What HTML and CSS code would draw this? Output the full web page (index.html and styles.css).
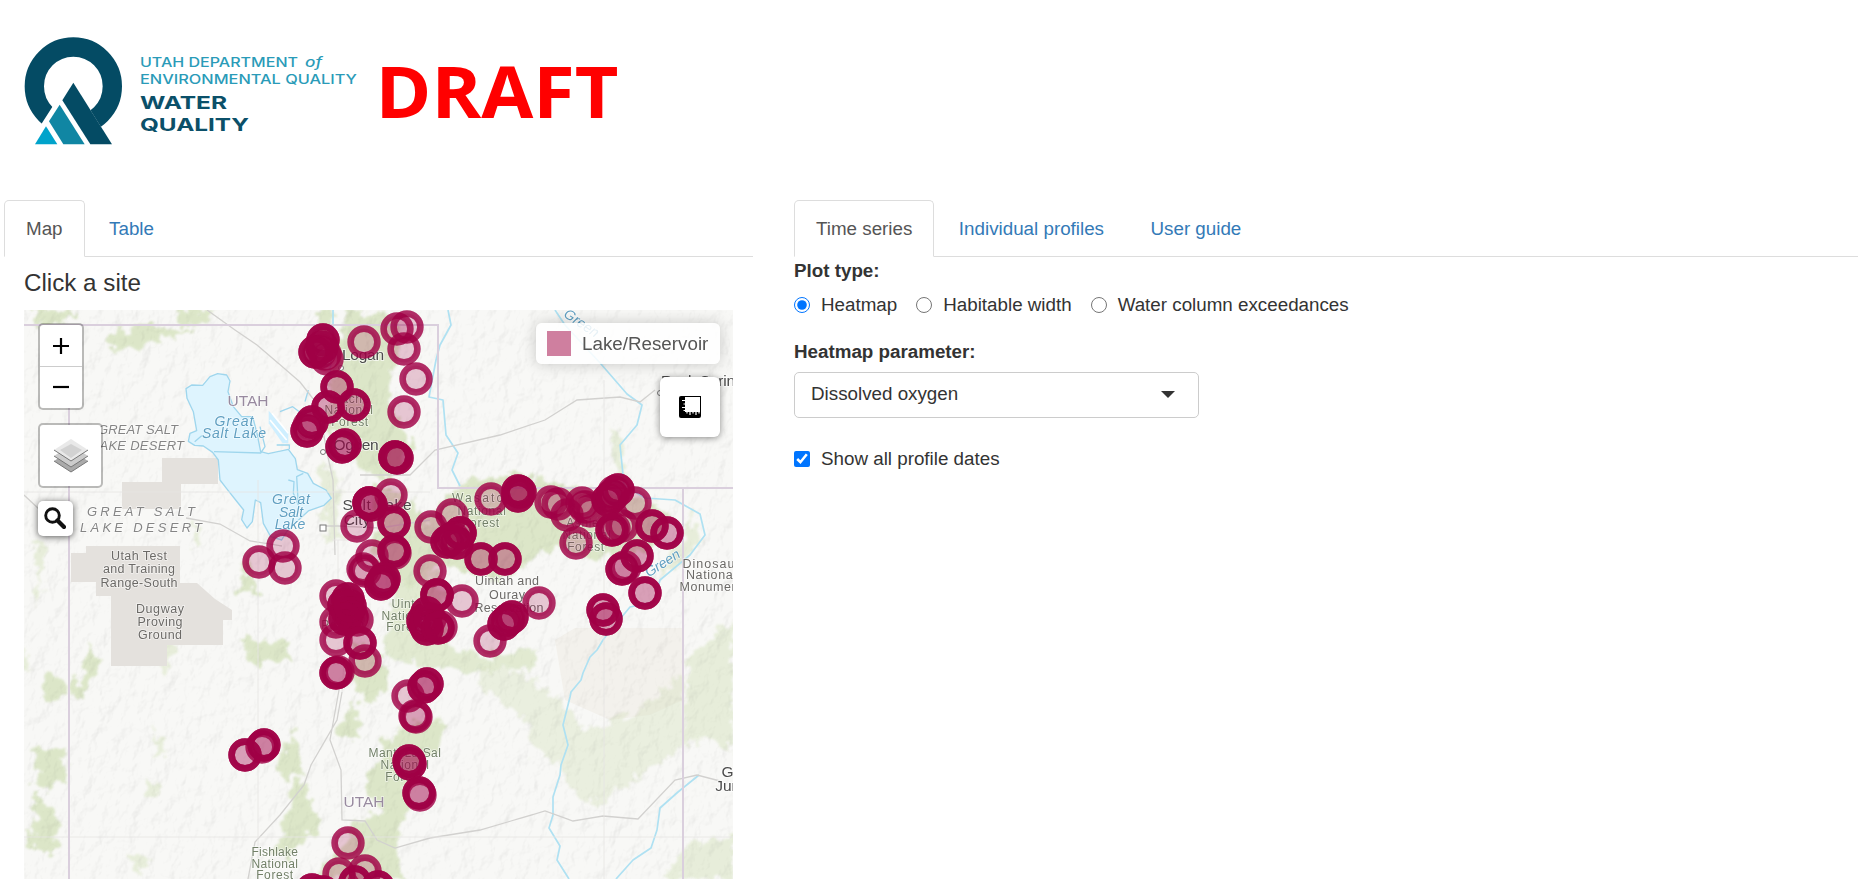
FILE: index.html
```html
<!DOCTYPE html>
<html lang="en">
<head>
<meta charset="utf-8">
<title>Lake profile dashboard</title>
<link rel="stylesheet" href="styles.css">
</head>
<body>
<header class="header">
  <svg class="logo" viewBox="0 0 640 199" role="img" aria-label="Utah Department of Environmental Quality, Water Quality">
    <g transform="translate(0 20) scale(.33333)">
      <ellipse cx="220" cy="199" rx="117" ry="118" fill="none" stroke="#044b64" stroke-width="58"/>
      <path d="M178 228 128 306 80 380H340L220 188 187 240Z" fill="#fff"/>
      <path d="M220 188 187 241 271 373H336Z" fill="#044b64"/>
      <path d="M179 254 147 304 190 373H254Z" fill="#1086a3"/>
      <path d="M138 319 105 373H172Z" fill="#00a3cb"/>
    </g>
    <g class="logo-dept">
      <text x="140" y="67" textLength="158" lengthAdjust="spacingAndGlyphs">UTAH DEPARTMENT</text>
      <text x="305" y="67" textLength="17" lengthAdjust="spacingAndGlyphs" font-style="italic">of</text>
      <text x="140" y="83.500" textLength="217" lengthAdjust="spacingAndGlyphs">ENVIRONMENTAL QUALITY</text>
    </g>
    <g class="logo-division">
      <text x="140" y="109" textLength="87" lengthAdjust="spacingAndGlyphs">WATER</text>
      <text x="140" y="130.500" textLength="109" lengthAdjust="spacingAndGlyphs">QUALITY</text>
    </g>
    <text class="draft" x="375.500" y="117.500" textLength="243" lengthAdjust="spacingAndGlyphs">DRAFT</text>
  </svg>
</header>
<main class="columns">
  <section class="left">
    <nav class="tabs"><a class="tab active">Map</a><a class="tab">Table</a></nav>
    <h4 class="heading">Click a site</h4>
    <div class="map">
      <svg class="map-canvas" id="map" viewBox="24 310 709 569">
        <defs>
          <filter id="rough" x="-5%" y="-5%" width="110%" height="110%">
            <feTurbulence type="fractalNoise" baseFrequency=".09" numOctaves="4" seed="4"/>
            <feDisplacementMap in="SourceGraphic" scale="22" xChannelSelector="R" yChannelSelector="G" result="d"/>
            <feGaussianBlur in="d" stdDeviation="1"/>
          </filter>
          <filter id="relief" x="0" y="0" width="100%" height="100%" color-interpolation-filters="sRGB">
            <feTurbulence type="fractalNoise" baseFrequency=".075 .05" numOctaves="4" seed="12"/>
            <feDiffuseLighting surfaceScale="3" diffuseConstant="1.150" lighting-color="#fff"><feDistantLight azimuth="225" elevation="60"/></feDiffuseLighting>
          </filter>
        </defs>
        <rect x="24" y="310" width="709" height="569" fill="#f8f8f6"/>
        <path d="M555 640 575 628H683V700L650 715 610 720 565 700Z" fill="#f3f1ec"/>
        <g filter="url(#rough)" fill="#d5e2bd" opacity=".8">
          <path d="M33 310H76L60 325 34 321ZM174 310H218L205 326 178 322ZM110 335 140 326 197 328 150 345 110 352Z"/>
          <path d="M317 310H330L326 342 315 350ZM348 310 395 316 399 350 388 400 412 440 394 480 368 475 345 440 325 425 331 380Z"/>
          <path d="M372 485 402 490 424 520 470 480 520 473 580 488 655 500 670 520 650 550 583 559 560 545 500 580 440 563 410 590 378 565Z"/>
          <path d="M395 562 440 578 450 650 490 655 540 650 538 668 470 672 422 668 385 655Z" opacity=".8"/>
          <path d="M480 665 530 676 560 700 584 730 640 712 684 672 684 748 650 765 615 795 590 805 565 778 548 755 535 755 525 725 510 705 485 690Z" opacity=".5"/>
          <path d="M350 640 382 655 388 690 365 704 350 680ZM352 697 362 737H338ZM385 742 410 724 442 720 440 744 405 788 408 806 395 850 404 879H316L323 864 350 842 350 822 385 812 363 787ZM300 775 320 824 285 860 276 850ZM295 730 302 770 285 780 276 765Z"/>
          <path d="M38 750H65V780L45 788 33 772ZM33 795 60 815 56 853 32 850ZM90 640 98 665 82 700 72 697ZM48 670 70 690 58 704 40 695ZM243 553 258 590 240 595ZM243 640H290V663H250Z"/>
          <path d="M690 655 733 620V755L710 740 684 745ZM686 845 733 835V879H665ZM612 425 626 450 622 485 613 460ZM690 510 700 540 680 565 655 580 678 545ZM156 645 175 640 165 675Z" opacity=".6"/>
          <path d="M33 540 48 545 40 582ZM36 580 44 592 35 604ZM20 645 32 658 25 680ZM153 730 168 752 155 760ZM148 780 160 788 150 796ZM125 855 150 860 140 875ZM190 515 204 545 192 550ZM318 460 340 475 342 540 325 540Z" opacity=".6"/>
        </g>
        <rect class="relief" x="24" y="310" width="709" height="569" filter="url(#relief)"/>
        <g fill="#e4e1dd">
          <path d="M162 458H218V484H181V509H122V482H162Z"/>
          <path d="M71 553H86V546H180V583H197L215 599 232 610V620H223V645H167V666H111V596H96V582H71Z"/>
        </g>
        <g transform="translate(20 310) scale(.33333)">
          <g fill="#def4fe" stroke="#9fd6ed" stroke-width="4" stroke-linejoin="round">
            <path d="M498 236 515 225 548 226 570 200 593 191 620 195 630 213 624 245 640 290 665 320 698 320 711 370 722 425 745 431 805 418 826 446 832 479 863 490 880 520 918 540 934 565 912 586 865 603 830 635 800 665 785 690 752 680 730 640 722 578 706 570 697 635 681 654 665 629 671 600 647 570 620 536 600 510 595 450 578 427 550 408 524 406 505 394 510 370 530 362 520 305 501 265Z"/>
            <path d="M524 395 545 377 560 385M582 425 722 429 735 410 720 350M805 510 822 515 820 550 835 585 830 500 850 490M770 405H808V418M780 305 818 290 855 318M855 275 865 240" fill="none"/>
          </g>
          <path d="M746 302 805 365V400H788L746 340Z" fill="#cfefff"/>
          <path d="M756 310 805 370M750 330 800 390" stroke="#fff" stroke-width="5"/>
        </g>
        <g fill="none" stroke="#afe1f2" stroke-width="1.700" stroke-linejoin="round">
          <path d="M333 310V345L329 380M448 310 451 325 440 345 436 360 429 397 443 400 446 435 458 453 452 470 460 486"/>
          <path d="M555 310 565 325 601 364 627 394 642 405 637 425 620 445 624 485 645 498 675 500 700 514 705 535 690 555 660 580 654 602 630 607 606 636 603 640 597 650 590 657 583 673 581 680 571 692 570 697 563 725 568 745 561 765 560 775 553 797 553 815 549 828 560 846 557 860 569 879"/>
          <path d="M699 775 678 792 660 808 657 830 651 848 633 860 616 879"/>
        </g>
        <g fill="none" stroke="#d2d1cf" stroke-width="1.300">
          <path d="M207 310 235 330 257 345 278 363 300 382 318 405 328 457 333 480 335 555M24 495 40 510M186 518 220 524 250 541 282 546M320 526H338L380 528 430 520M360 475 410 475 435 450 500 435 545 420 577 400 620 397 640 402 655 390M342 692 337 720 311 765 304 785 280 815 255 842 248 879M339 690 330 740 341 770 342 820 365 821 377 840 395 848 430 838 480 830 511 821 545 811 573 821 603 816 638 819 675 780 697 775 720 781"/>
          <path d="M338 540V590L348 600 342 692M332 540H355M24 837H733M258 480V879M24 492H430M604 380V879" stroke="#e6e4e3" stroke-width=".8"/>
        </g>
        <g fill="none" stroke="#dacfdd" stroke-width="2">
          <path d="M24 325H438V488H733M69 325V879M683 489V879"/>
        </g>
        <g class="places">
          <text x="363" y="360" class="city" textLength="42">Logan</text><text x="356" y="450" class="city" textLength="45">Ogden</text>
          <text x="377" y="510" class="city" textLength="69">Salt Lake</text><text x="357" y="525" class="city">City</text>
          <text x="706" y="386" class="city" textLength="90">Rock Springs</text>
          <text x="743" y="777" class="city">Grand</text><text x="744" y="791" class="city">Junction</text>
          <g class="forest">
            <text x="351" y="403">Cache</text><text x="349" y="414">National</text><text x="350" y="426">Forest</text>
            <text x="482" y="502" textLength="60">Wasatch</text><text x="482" y="515">National</text><text x="481" y="527">Forest</text>
            <text x="586" y="527">Ashley</text><text x="587" y="539">National</text><text x="586" y="551">Forest</text>
            <text x="407" y="608">Uinta</text><text x="406" y="620">National</text><text x="405" y="631">Forest</text>
            <text x="405" y="757" textLength="73">Manti-La Sal</text><text x="405" y="769">National</text><text x="404" y="781">Forest</text>
            <text x="275" y="856" textLength="47">Fishlake</text><text x="275" y="868" textLength="47">National</text><text x="275" y="879">Forest</text>
            <text x="348" y="605">Provo</text><text x="343" y="629">Payson</text>
          </g>
          <g class="reserve">
            <text x="139" y="560" textLength="56">Utah Test</text><text x="139" y="573" textLength="72">and Training</text><text x="139" y="587" textLength="77">Range-South</text>
            <text x="160" y="613" textLength="48">Dugway</text><text x="160" y="626" textLength="45">Proving</text><text x="160" y="639" textLength="44">Ground</text>
            <text x="507" y="585" textLength="64">Uintah and</text><text x="507" y="599" textLength="36">Ouray</text><text x="509" y="612" textLength="69">Reservation</text>
            <text x="711" y="568" textLength="57">Dinosaur</text><text x="711" y="579" textLength="50">National</text><text x="711" y="591" textLength="63">Monument</text>
          </g>
          <g class="desert"><text x="138" y="434" textLength="80">GREAT SALT</text><text x="138" y="450" textLength="92">LAKE DESERT</text><text x="141" y="516" textLength="108">GREAT  SALT</text><text x="141" y="532" textLength="122">LAKE  DESERT</text></g>
          <g class="water">
            <text x="234" y="426" textLength="39">Great</text><text x="234" y="438" textLength="64">Salt Lake</text><text x="291" y="504" textLength="38">Great</text><text x="291" y="517">Salt</text><text x="290" y="529">Lake</text>
            <text x="579" y="327" transform="rotate(34 579 327)">Green</text><text x="665" y="567" transform="rotate(-33 665 567)">Green</text>
          </g>
          <g class="state"><text x="248" y="406">UTAH</text><text x="364" y="807">UTAH</text></g>
        </g>
        <g fill="#fff" stroke="#777"><rect x="320" y="525" width="6" height="6"/><circle cx="323" cy="452" r="2.500"/><circle cx="341" cy="368" r="2.500"/><circle cx="660" cy="393" r="2.500"/></g>
        <g id="sites" class="sites"></g>
      </svg>
      <div class="map-box zoom"><span><svg viewBox="0 0 18 18"><path d="M1 9H17M9 1V17"/></svg></span><span><svg viewBox="0 0 18 18"><path d="M1 9H17"/></svg></span></div>
      <div class="map-box layers">
        <svg viewBox="0 0 36 36">
          <path d="M1 23 18 12 35 23 18 34Z" fill="#aaa"/><path d="M1 23 18 34 35 23" fill="none" stroke="#777"/>
          <path d="M1 18 18 7 35 18 18 29Z" fill="#ccc"/><path d="M1 18 18 29 35 18" fill="none" stroke="#777"/>
          <path d="M1 12 18 1 35 12 18 23Z" fill="#e9e9e9"/><path d="M7 12 18 6 29 12 18 20Z" fill="#d2d2d2"/><path d="M1 12 18 23 35 12" fill="none" stroke="#777"/>
        </svg>
      </div>
      <div class="search"><svg viewBox="0 0 22 22"><circle cx="8.500" cy="8.500" r="6.800" fill="none" stroke="#111" stroke-width="2.900"/><path d="M13.500 13.500 20 20" stroke="#111" stroke-width="4.200" stroke-linecap="round"/></svg></div>
      <div class="legend"><i></i><span>Lake/Reservoir</span></div>
      <div class="measure"><svg viewBox="0 0 22 22"><path d="M2 0H22V20A2 2 0 0 1 20 22H2A2 2 0 0 1 0 20V2A2 2 0 0 1 2 0Z" fill="#000"/><path d="M6 1H21V16H6Z" fill="#fff"/><path d="M3 4.500H7M4.500 8H7M3 11.500H7M4.500 14.500H7M8 15V17.500M11 15V19M14 15V17.500M17 15V19M20 15V17.500" stroke="#fff" stroke-width="1.200"/></svg></div>
    </div>
  </section>
  <section class="right">
    <nav class="tabs"><a class="tab active">Time series</a><a class="tab">Individual profiles</a><a class="tab">User guide</a></nav>
    <div class="label">Plot type:</div>
    <div class="options">
      <label><input type="radio" name="plot" checked>Heatmap</label>
      <label><input type="radio" name="plot">Habitable width</label>
      <label><input type="radio" name="plot">Water column exceedances</label>
    </div>
    <div class="label parameter">Heatmap parameter:</div>
    <div class="select"><span>Dissolved oxygen</span><i></i></div>
    <div class="options dates"><label><input type="checkbox" checked>Show all profile dates</label></div>
  </section>
</main>
<script src="sites.js"></script>
</body>
</html>
```
FILE: styles.css
```css
* { box-sizing: border-box; }
body { margin: 0; background: #fff; color: #333; font: 18.8px/25px "Liberation Sans", Arial, sans-serif; overflow: hidden; height: 879px; }
.header { height: 200px; }
.logo { display: block; width: 640px; height: 199px; }
.logo-dept { font: 500 13px Inter, sans-serif; fill: #2a9bb8; }
.logo-division { font: 700 17.4px Inter, sans-serif; fill: #0b5069; }
.draft { font: 700 71.5px "Open Sans", sans-serif; fill: #f00; }
.columns { display: flex; align-items: flex-start; gap: 41px; padding-left: 4px; }
.left { width: 749px; flex: none; }
.right { flex: 1; }
.tabs { display: flex; gap: 2.5px; height: 57px; border-bottom: 1px solid #ddd; }
.tab { height: 57px; padding: 15px 21px; border: 1px solid transparent; color: #337ab7; white-space: nowrap; }
.tab.active { color: #555; background: #fff; border-color: #ddd #ddd #fff; border-radius: 5px 5px 0 0; }
.heading { margin: 14px 0 15px 20px; font-size: 24.2px; line-height: 24px; font-weight: 400; }
.map { position: relative; width: 709px; height: 569px; margin-left: 20px; overflow: hidden; }
.map-canvas { display: block; width: 709px; height: 569px; }
.relief { mix-blend-mode: multiply; opacity: .11; }
.places { font-family: "Liberation Sans", sans-serif; paint-order: stroke; stroke: rgba(255,255,255,.6); stroke-width: 2px; }
.city { font-size: 15.5px; fill: #4b4b4b; }
.forest { font-size: 12px; fill: #728068; letter-spacing: .6px; }
.reserve { font-size: 12.5px; fill: #6b6966; }
.desert { font-size: 13px; font-style: italic; fill: #858585; }
.water { font-size: 14px; font-style: italic; fill: #609fc1; }
.state { font-size: 15.5px; fill: #988a9f; }
.forest, .reserve, .desert, .water, .state { stroke-width: 1.5px; }
.places text { text-anchor: middle; }
.sites circle { fill: #a00045; fill-opacity: .2; stroke: #a00045; stroke-opacity: .82; stroke-width: 6.6px; }
.map-box { position: absolute; left: 14px; background: #fff; background-clip: padding-box; border: 2px solid rgba(0,0,0,.25); border-radius: 5px; }
.zoom { top: 13px; width: 46px; height: 87px; }
.zoom span { display: flex; height: 42px; align-items: center; justify-content: center; }
.zoom span + span { height: 39px; }
.zoom span:first-child { border-bottom: 1px solid #ccc; }
.zoom svg { width: 18px; height: 18px; stroke: #000; stroke-width: 2.2; }
.layers { top: 113px; width: 65px; height: 65px; display: flex; align-items: center; justify-content: center; }
.layers svg { width: 36px; height: 36px; }
.search { position: absolute; left: 14px; top: 191px; width: 35px; height: 35px; background: #fff; border-radius: 5px; box-shadow: 0 1px 7px rgba(0,0,0,.65); padding: 6px; }
.search svg { display: block; width: 22px; height: 22px; }
.legend { position: absolute; left: 512px; top: 13px; width: 184px; height: 41px; display: flex; align-items: center; padding: 0 11px; gap: 11px; background: rgba(255,255,255,.85); border-radius: 6px; box-shadow: 0 0 15px rgba(0,0,0,.2); color: #555; white-space: nowrap; }
.legend i { width: 24px; height: 25px; background: #cf7f9f; flex: none; }
.measure { position: absolute; left: 636px; top: 67px; width: 60px; height: 60px; background: #fff; border-radius: 6px; box-shadow: 0 1px 7px rgba(0,0,0,.45); padding: 19px; }
.measure svg { display: block; width: 22px; height: 22px; }
.label { font-weight: 700; line-height: 25px; margin-top: 1px; }
.options { display: flex; gap: 19px; margin-top: 9px; }
.options label { display: flex; align-items: center; white-space: nowrap; }
.options input { margin: 0 11px 0 0; width: 16px; height: 16px; accent-color: #0075ff; }
.parameter { margin-top: 22px; }
.select { width: 405px; height: 46px; margin-top: 8px; padding: 0 23px 3px 16px; display: flex; align-items: center; justify-content: space-between; border: 1px solid #ccc; border-radius: 5px; }
.select i { border: 7px solid transparent; border-top-color: #333; border-bottom: 0; margin-top: 2px; }
.dates { margin-top: 28px; }
```
FILE: sites.js
```js
// x, y and number of coincident monitoring sites
const sites = [
  [323,340,2],[315,352,2],[327,359,1],[322,347,2],[320,352,1],[325,354,1],[364,342,1],[397,329,1],[407,327,1],[404,349,1],[416,379,1],[404,412,1],
  [337,387,2],[328,407,2],[354,405,2],[312,422,2],[307,431,2],[309,426,1],[342,447,2],[345,445,2],[395,457,3],[397,458,2],
  [391,495,1],[369,503,3],[371,505,2],[357,526,1],[394,523,2],[431,527,1],[452,515,1],[447,542,2],[460,533,3],[457,543,2],
  [453,538,1],[450,540,1],[394,551,2],[395,553,1],[372,556,1],[363,569,1],[365,571,1],[384,579,2],[381,584,2],[383,582,1],[481,559,2],
  [505,559,2],[430,571,1],[491,499,1],[518,491,2],[520,492,2],[518,496,2],[551,502,1],[558,504,1],[567,515,1],[582,503,1],[585,507,1],
  [590,511,1],[618,490,2],[608,500,2],[612,496,2],[614,492,1],[635,503,1],[622,526,1],[612,530,2],[614,529,1],[576,543,1],
  [652,526,2],[667,533,2],[637,556,2],[622,569,2],[625,567,1],[645,593,2],[603,610,2],[606,619,2],[539,603,1],[490,641,1],
  [504,624,2],[512,617,2],[508,620,2],[283,546,1],[259,562,1],[285,568,1],[336,596,1],[348,599,2],[344,605,2],[348,612,3],
  [336,622,1],[352,617,2],[357,620,1],[345,619,2],[350,606,2],[336,640,1],[360,643,2],[365,661,1],[336,673,2],[338,672,1],[437,595,3],
  [462,601,1],[427,613,2],[423,621,2],[427,629,2],[425,625,2],[430,619,1],[438,628,2],[441,627,1],[408,696,1],[427,684,2],[424,687,2],
  [416,717,1],[415,716,1],[409,761,2],[410,764,2],[419,793,2],[420,795,1],[348,843,1],[339,874,1],[365,871,1],[312,890,2],
  [323,892,2],[355,882,2],[378,887,2],[245,755,2],[264,745,2],[262,747,1]
];
const layer = document.getElementById("sites");
for (const [x, y, count] of sites) {
  for (let i = 0; i < count; i++) {
    const c = document.createElementNS("http://www.w3.org/2000/svg", "circle");
    c.setAttribute("cx", x);
    c.setAttribute("cy", y);
    c.setAttribute("r", 13.4);
    layer.appendChild(c);
  }
}
```
